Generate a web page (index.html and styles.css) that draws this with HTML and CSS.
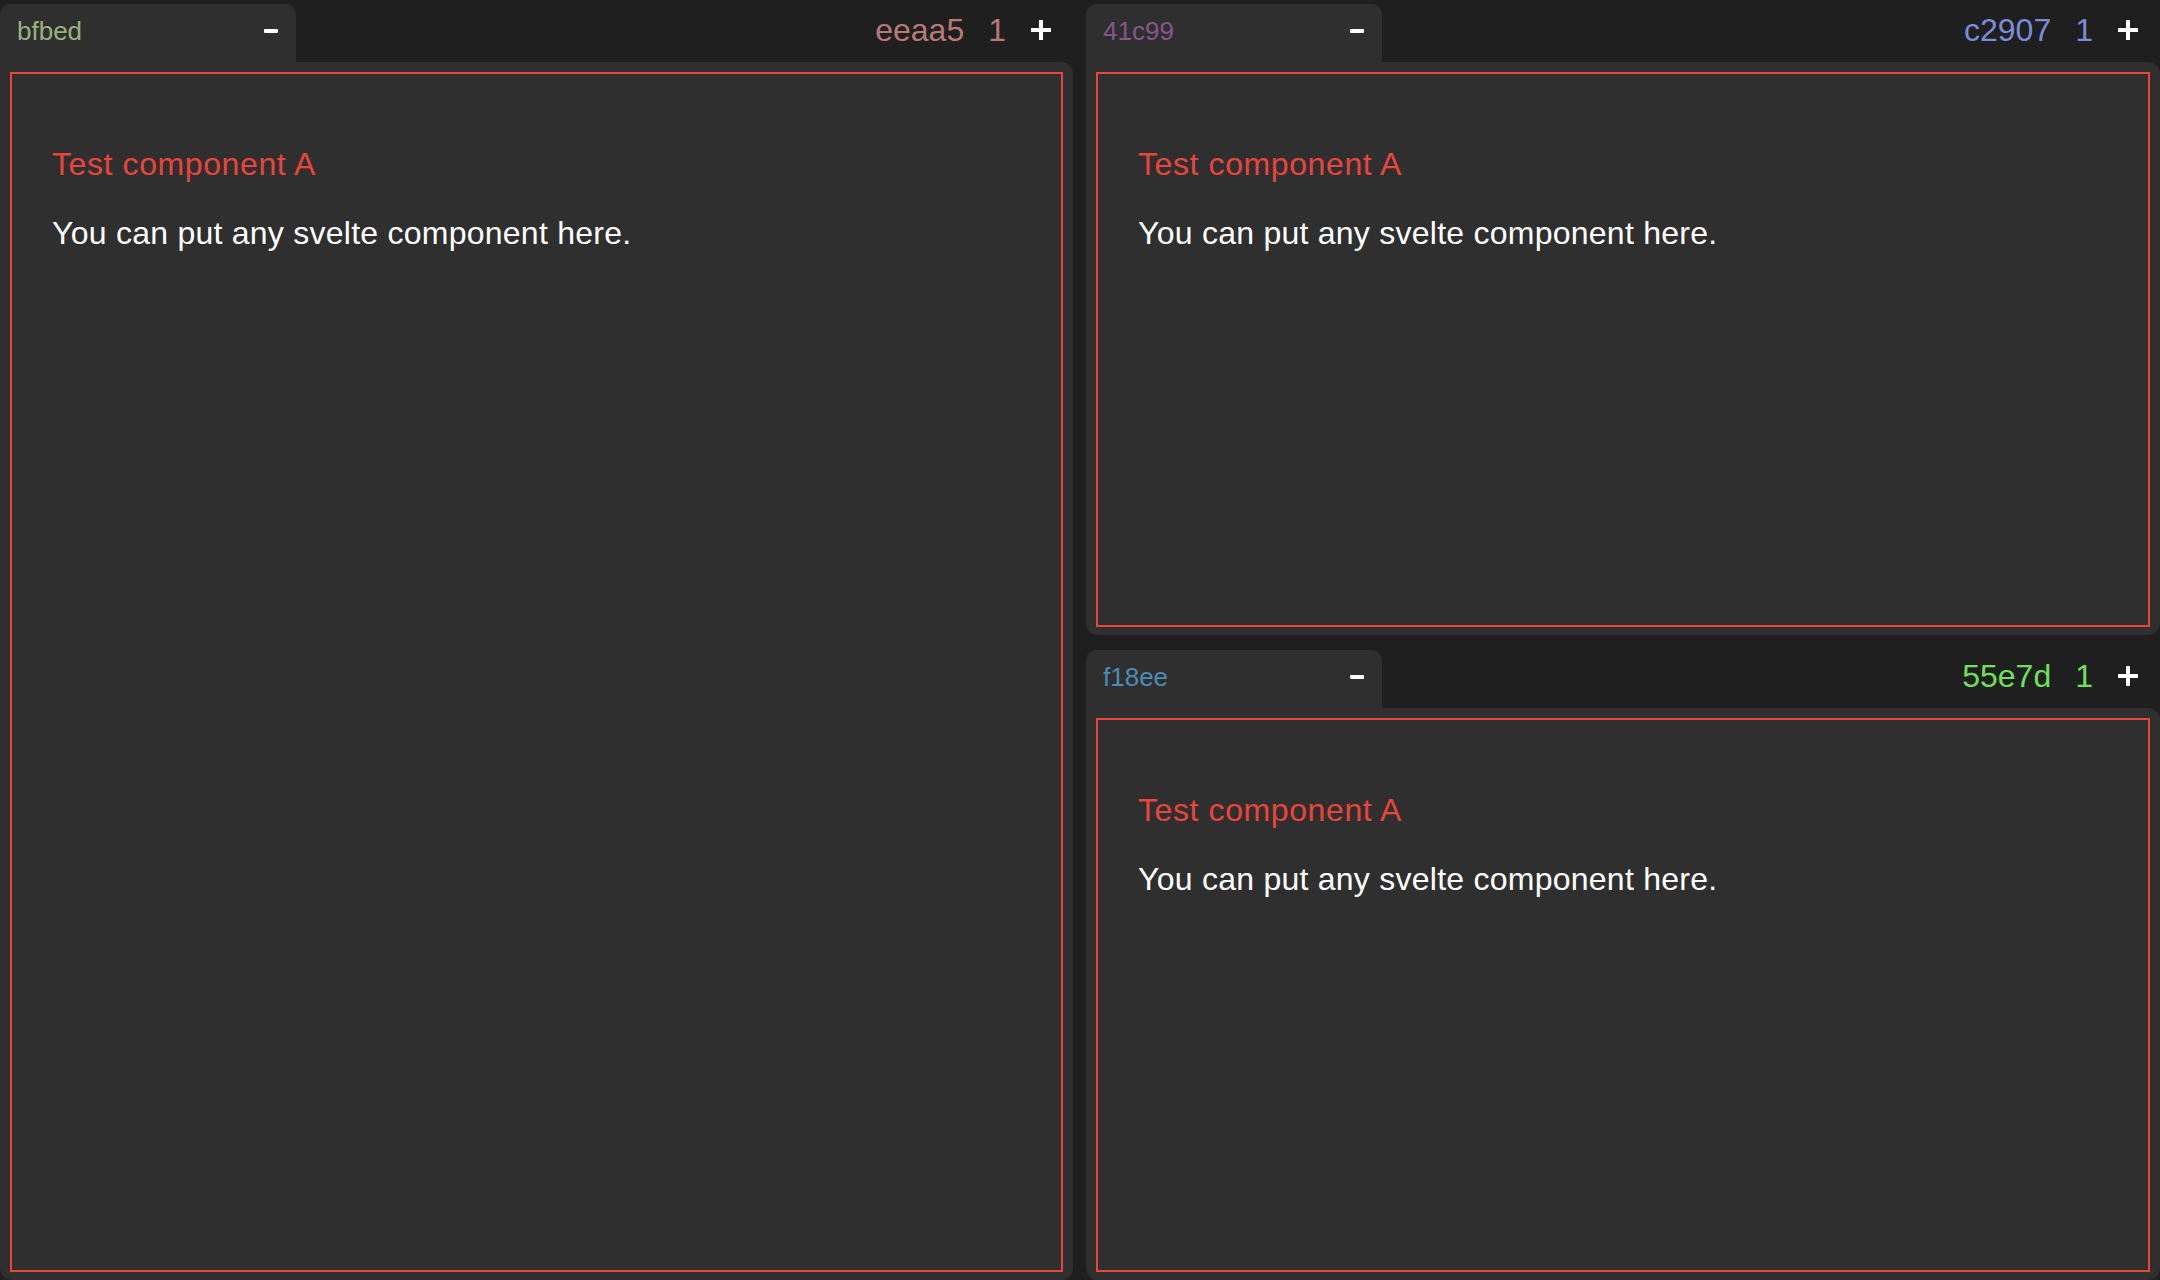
FILE: index.html
```html
<!DOCTYPE html>
<html>
<head>
<meta charset="utf-8">
<link rel="stylesheet" href="styles.css">
</head>
<body>
<div class="root">
  <section class="pane pane-left">
    <header class="pane-head">
      <div class="tab"><span class="tab-label c-bfbed">bfbed</span><span class="minus"></span></div>
      <div class="head-right c-eeaa5"><span class="id">eeaa5</span><span class="count">1</span><svg class="plus" viewBox="0 0 20 20"><path d="M10 0V20M0 10H20" stroke="#fff" stroke-width="4"/></svg></div>
    </header>
    <div class="pane-body">
      <div class="comp">
        <div class="comp-title">Test component A</div>
        <p class="comp-text">You can put any svelte component here.</p>
      </div>
    </div>
  </section>
  <div class="col">
    <section class="pane pane-top">
      <header class="pane-head">
        <div class="tab"><span class="tab-label c-41c99">41c99</span><span class="minus"></span></div>
        <div class="head-right c-c2907"><span class="id">c2907</span><span class="count">1</span><svg class="plus" viewBox="0 0 20 20"><path d="M10 0V20M0 10H20" stroke="#fff" stroke-width="4"/></svg></div>
      </header>
      <div class="pane-body">
        <div class="comp">
          <div class="comp-title">Test component A</div>
          <p class="comp-text">You can put any svelte component here.</p>
        </div>
      </div>
    </section>
    <section class="pane pane-bottom">
      <header class="pane-head">
        <div class="tab"><span class="tab-label c-f18ee">f18ee</span><span class="minus"></span></div>
        <div class="head-right c-55e7d"><span class="id">55e7d</span><span class="count">1</span><svg class="plus" viewBox="0 0 20 20"><path d="M10 0V20M0 10H20" stroke="#fff" stroke-width="4"/></svg></div>
      </header>
      <div class="pane-body">
        <div class="comp">
          <div class="comp-title">Test component A</div>
          <p class="comp-text">You can put any svelte component here.</p>
        </div>
      </div>
    </section>
  </div>
</div>
</body>
</html>
```
FILE: styles.css
```css
html, body {
  margin: 0;
  padding: 0;
  background: #1f1f1f;
  font-family: "Liberation Sans", Arial, sans-serif;
}
.root {
  display: flex;
  gap: 13px;
  height: 1280px;
  overflow: hidden;
}
.pane-left {
  width: 1073px;
  flex: none;
}
.col {
  flex: 1;
  display: flex;
  flex-direction: column;
  gap: 11px;
}
.pane {
  display: flex;
  flex-direction: column;
}
.pane-top {
  height: 635px;
}
.pane-bottom {
  flex: 1;
}
.pane-head {
  height: 62px;
  display: flex;
  align-items: stretch;
  flex: none;
}
.tab {
  margin-top: 4px;
  width: 296px;
  background: #2f2f2f;
  border-radius: 10px 10px 0 0;
  display: flex;
  align-items: center;
  justify-content: space-between;
  padding: 0 18px 0 17px;
  box-sizing: border-box;
}
.tab-label {
  font-size: 26px;
  line-height: 26px;
  margin-top: -4px;
}
.minus {
  width: 14px;
  height: 4px;
  background: #fff;
  border-radius: 1px;
  margin-top: -4px;
}
.head-right {
  margin-left: auto;
  display: flex;
  align-items: center;
  padding-right: 22px;
  font-size: 32px;
  margin-top: -2px;
}
.head-right .id {
  margin-right: 24px;
}
.head-right .count {
  margin-right: 25px;
}
.plus {
  width: 20px;
  height: 20px;
  display: block;
}
.pane-body {
  flex: 1;
  background: #2f2f2f;
  border-radius: 0 12px 12px 12px;
  padding: 10px 10px 8px;
  box-sizing: border-box;
  display: flex;
}
.comp {
  flex: 1;
  border: 2px solid #e8453c;
  padding: 70px 40px 0;
}
.comp-title {
  color: #e8453c;
  font-size: 32px;
  line-height: 40px;
  letter-spacing: 0.6px;
}
.comp-text {
  margin: 29px 0 0;
  color: #ffffff;
  font-size: 32px;
  line-height: 40px;
  letter-spacing: 0.25px;
}
.c-bfbed { color: #9db17c; }
.c-eeaa5 { color: #b87a78; }
.c-41c99 { color: #87558a; }
.c-c2907 { color: #7a8cd8; }
.c-f18ee { color: #4d8cb6; }
.c-55e7d { color: #6fe057; }
```
